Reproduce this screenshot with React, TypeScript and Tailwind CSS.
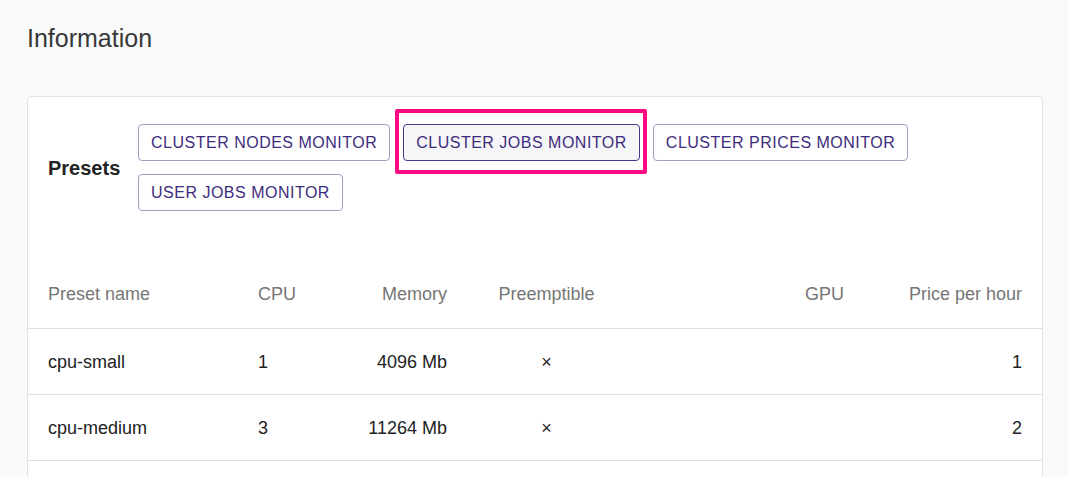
import React from "react";

type Preset = {
  name: string;
  cpu: number;
  memory: string;
  preemptible: boolean;
  gpu: string;
  price: number;
};

const presetButtons = [
  "CLUSTER NODES MONITOR",
  "CLUSTER JOBS MONITOR",
  "CLUSTER PRICES MONITOR",
  "USER JOBS MONITOR",
];

const presets: Preset[] = [
  { name: "cpu-small", cpu: 1, memory: "4096 Mb", preemptible: false, gpu: "", price: 1 },
  { name: "cpu-medium", cpu: 3, memory: "11264 Mb", preemptible: false, gpu: "", price: 2 },
];

const cols = "grid grid-cols-[210px_80px_149px_159px_238px_1fr]";

function PresetButton({ label, active }: { label: string; active?: boolean }) {
  return (
    <div className="relative">
      <button
        className={
          "h-[37px] px-[12px] rounded-[4px] border text-[16px] tracking-[0.5px] text-[#3d2c7c] " +
          (active ? "border-[#4b3589] bg-[#f6f6f9]" : "border-[#a99bc6] bg-white")
        }
      >
        {label}
      </button>
      {active && (
        <div className="absolute -left-[8px] -top-[15px] -right-[7px] -bottom-[13px] border-[4px] border-[#ff0a82] rounded-[2px] pointer-events-none" />
      )}
    </div>
  );
}

export default function App() {
  return (
    <div
      className="min-h-screen bg-[#f9fafc] pl-[27px] pr-[25px] pt-[22px]"
      style={{ fontFamily: '"Liberation Sans", Arial, sans-serif' }}
    >
      <h1 className="text-[25px] leading-[32px] text-[#383838] font-normal">Information</h1>

      <div className="mt-[42px] bg-white border border-[#e2e2e4] rounded-[4px]">
        {/* Presets */}
        <div className="flex items-center pl-[20px] pr-[20px] pt-[27px] pb-[50px]">
          <div className="w-[90px] shrink-0 text-[20px] font-bold text-[#222]">Presets</div>
          <div className="flex flex-wrap gap-x-[13px] gap-y-[13px]">
            {presetButtons.map((b) => (
              <PresetButton key={b} label={b} active={b === "CLUSTER JOBS MONITOR"} />
            ))}
          </div>
        </div>

        {/* Table */}
        <div className="text-[18px] pb-[40px]">
          <div className={cols + " h-[68px] items-center text-[#767676] border-b border-[#e0e0e0]"}>
            <div className="pl-[20px]">Preset name</div>
            <div className="pl-[20px]">CPU</div>
            <div className="pr-[20px] text-right">Memory</div>
            <div className="text-center">Preemptible</div>
            <div className="pr-[20px] text-right">GPU</div>
            <div className="pr-[20px] text-right">Price per hour</div>
          </div>
          {presets.map((p) => (
            <div
              key={p.name}
              className={cols + " h-[66px] pt-[2px] items-center text-[#222] border-b border-[#e0e0e0]"}
            >
              <div className="pl-[20px]">{p.name}</div>
              <div className="pl-[20px]">{p.cpu}</div>
              <div className="pr-[20px] text-right">{p.memory}</div>
              <div className="text-center">{p.preemptible ? "✓" : "×"}</div>
              <div className="pr-[20px] text-right">{p.gpu}</div>
              <div className="pr-[20px] text-right">{p.price}</div>
            </div>
          ))}
        </div>
      </div>
    </div>
  );
}
